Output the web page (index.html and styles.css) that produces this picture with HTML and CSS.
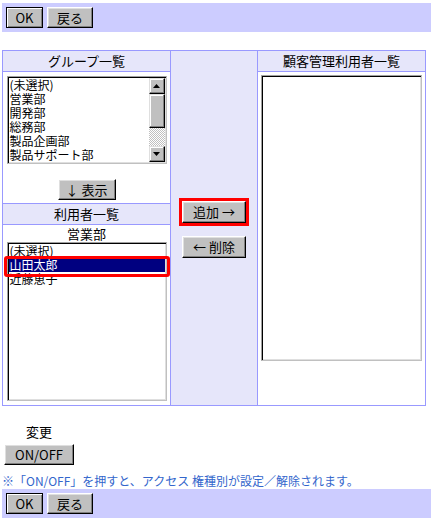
FILE: index.html
```html
<!DOCTYPE html>
<html lang="ja">
  <head>
    <meta charset="UTF-8" />
    <title>顧客管理利用者設定</title>
    <link rel="stylesheet" href="styles.css">
  </head>
  <body>
    <div class="bar">
      <button class="btn btn-default btn-ok">OK</button>
      <button class="btn btn-back">戻る</button>
    </div>

    <div class="panel">
      <!-- 左：グループ・利用者 -->
      <div class="col col-left">
        <div class="head">グループ一覧</div>
        <div class="cell group-cell">
          <div class="listbox group-list">
            <ul class="options">
              <li>(未選択)</li>
              <li>営業部</li>
              <li>開発部</li>
              <li>総務部</li>
              <li>製品企画部</li>
              <li>製品サポート部</li>
            </ul>
            <div class="scrollbar">
              <span class="sb-btn">
                <svg width="7" height="4" viewBox="0 0 7 4"><path d="M3.5 0L7 4H0z"/></svg>
              </span>
              <span class="sb-thumb"></span>
              <span class="sb-track"></span>
              <span class="sb-btn">
                <svg width="7" height="4" viewBox="0 0 7 4"><path d="M0 0H7L3.5 4z"/></svg>
              </span>
            </div>
          </div>
          <button class="btn show-btn">↓ 表示</button>
        </div>
        <div class="head head-sub">利用者一覧</div>
        <div class="cell user-cell">
          <div class="dept">営業部</div>
          <div class="listbox user-list">
            <ul class="options">
              <li>(未選択)</li>
              <li class="selected">山田太郎</li>
              <li>近藤恵子</li>
            </ul>
          </div>
        </div>
      </div>

      <!-- 中央：追加・削除 -->
      <div class="col col-mid">
        <button class="btn btn-action btn-marked">追加 →</button>
        <button class="btn btn-action">← 削除</button>
      </div>

      <!-- 右：顧客管理利用者 -->
      <div class="col col-right">
        <div class="head">顧客管理利用者一覧</div>
        <div class="cell client-cell">
          <div class="listbox client-list"></div>
        </div>
      </div>
    </div>

    <div class="change">
      <span class="change-label">変更</span>
      <button class="btn btn-toggle">ON/OFF</button>
    </div>
    <p class="note">※「ON/OFF」を押すと、アクセス 権種別が設定／解除されます。</p>

    <div class="bar">
      <button class="btn btn-default btn-ok">OK</button>
      <button class="btn btn-back">戻る</button>
    </div>
  </body>
</html>
```

FILE: styles.css
```css
*,
*::before,
*::after {
  box-sizing: border-box;
}
:root {
  --bar: #ccccff;
  --lavender: #e6e6fa;
  --line: #9999ff;
  --face: #c0c0c0;
  --note: #3366cc;
}
body {
  margin: 3px 0 0 2px;
  font-family: "Noto Sans CJK JP", sans-serif;
  font-size: 13px;
  color: #000;
  background: #fff;
  overflow: hidden;
}
ul {
  margin: 0;
  padding: 0;
  list-style: none;
}

/* ボタン（クラシック） */
.btn {
  height: 21px;
  padding: 0;
  font: inherit;
  line-height: 17px;
  color: #000;
  background: var(--face);
  border: 1px solid;
  border-color: #fff #000 #000 #fff;
  box-shadow: inset -1px -1px 0 #808080, inset 1px 1px 0 #dfdfdf;
  cursor: pointer;
}
.btn-default {
  border-color: #000;
  box-shadow: inset 1px 1px 0 #fff, inset -1px -1px 0 #808080;
}
.btn-ok {
  width: 37px;
}
.btn-back {
  width: 46px;
}

.bar {
  display: flex;
  gap: 4px;
  height: 29px;
  padding: 4px;
  background: var(--bar);
}

/* 一覧パネル */
.panel {
  display: flex;
  width: 424px;
  margin-top: 18px;
  border: 1px solid var(--line);
}
.col-left,
.col-right {
  display: flex;
  flex-direction: column;
  width: 168px;
}
.col-left {
  border-right: 1px solid var(--line);
}
.col-right {
  width: 167px;
}
.col-mid {
  display: flex;
  flex-direction: column;
  align-items: center;
  justify-content: center;
  gap: 13px;
  width: 87px;
  padding-top: 2px;
  background: var(--lavender);
  border-right: 1px solid var(--line);
}
.head {
  height: 21px;
  line-height: 20px;
  text-align: center;
  background: var(--lavender);
  border-bottom: 1px solid var(--line);
}
.head-sub {
  height: 22px;
  border-top: 1px solid var(--line);
}
.cell {
  display: flex;
  flex-direction: column;
  align-items: center;
  background: #fff;
}
.group-cell {
  height: 131px;
  padding-top: 4px;
}
.user-cell {
  height: 180px;
}
.client-cell {
  flex: 1;
  padding-top: 3px;
}
.dept {
  margin-top: 1px;
  line-height: 16px;
}

/* リストボックス */
.listbox {
  position: relative;
  display: flex;
  width: 160px;
  background: #fff;
  border: 1px solid;
  border-color: #a0a0a0 #c0c0c0 #c0c0c0 #a0a0a0;
  box-shadow: inset 1px 1px 0 #000, inset -1px -1px 0 #dfdfdf;
  padding: 1px;
}
.group-list {
  height: 88px;
  overflow: hidden;
}
.user-list {
  height: 159px;
}
.client-list {
  width: 161px;
  height: 286px;
}
.options {
  flex: 1;
  font-size: 12px;
}
.options li {
  height: 14px;
  padding-left: 1px;
  line-height: 14px;
  white-space: nowrap;
}
.options .selected {
  position: relative;
  color: #fff;
  background: #000080;
}
.options .selected::after {
  content: "";
  position: absolute;
  top: -2px;
  right: -5px;
  bottom: -5px;
  left: -5px;
  border: 3px solid #ff0000;
  border-radius: 3px;
}

.scrollbar {
  display: flex;
  flex-direction: column;
  width: 16px;
}
.sb-btn,
.sb-thumb {
  display: flex;
  align-items: center;
  justify-content: center;
  background: var(--face);
  border: 1px solid;
  border-color: #dfdfdf #000 #000 #dfdfdf;
  box-shadow: inset -1px -1px 0 #808080, inset 1px 1px 0 #fff;
}
.sb-btn {
  height: 16px;
}
.sb-thumb {
  height: 34px;
}
.sb-track {
  flex: 1;
  background: repeating-conic-gradient(#c0c0c0 0 25%, #fff 0 50%) 0 0 / 2px 2px;
}

.show-btn {
  width: 58px;
  margin-top: 15px;
}
.btn-action {
  width: 64px;
  height: 22px;
}
.btn-marked {
  outline: 3px solid #ff0000;
  outline-offset: 0;
}

/* 変更 */
.change {
  display: inline-flex;
  flex-direction: column;
  align-items: center;
  gap: 3px;
  margin: 17px 0 0 2px;
}
.change-label {
  line-height: 18px;
}
.btn-toggle {
  width: 70px;
}
.note {
  margin: 7px 0 0;
  font-size: 12px;
  line-height: 17px;
  color: var(--note);
  white-space: nowrap;
}
```
